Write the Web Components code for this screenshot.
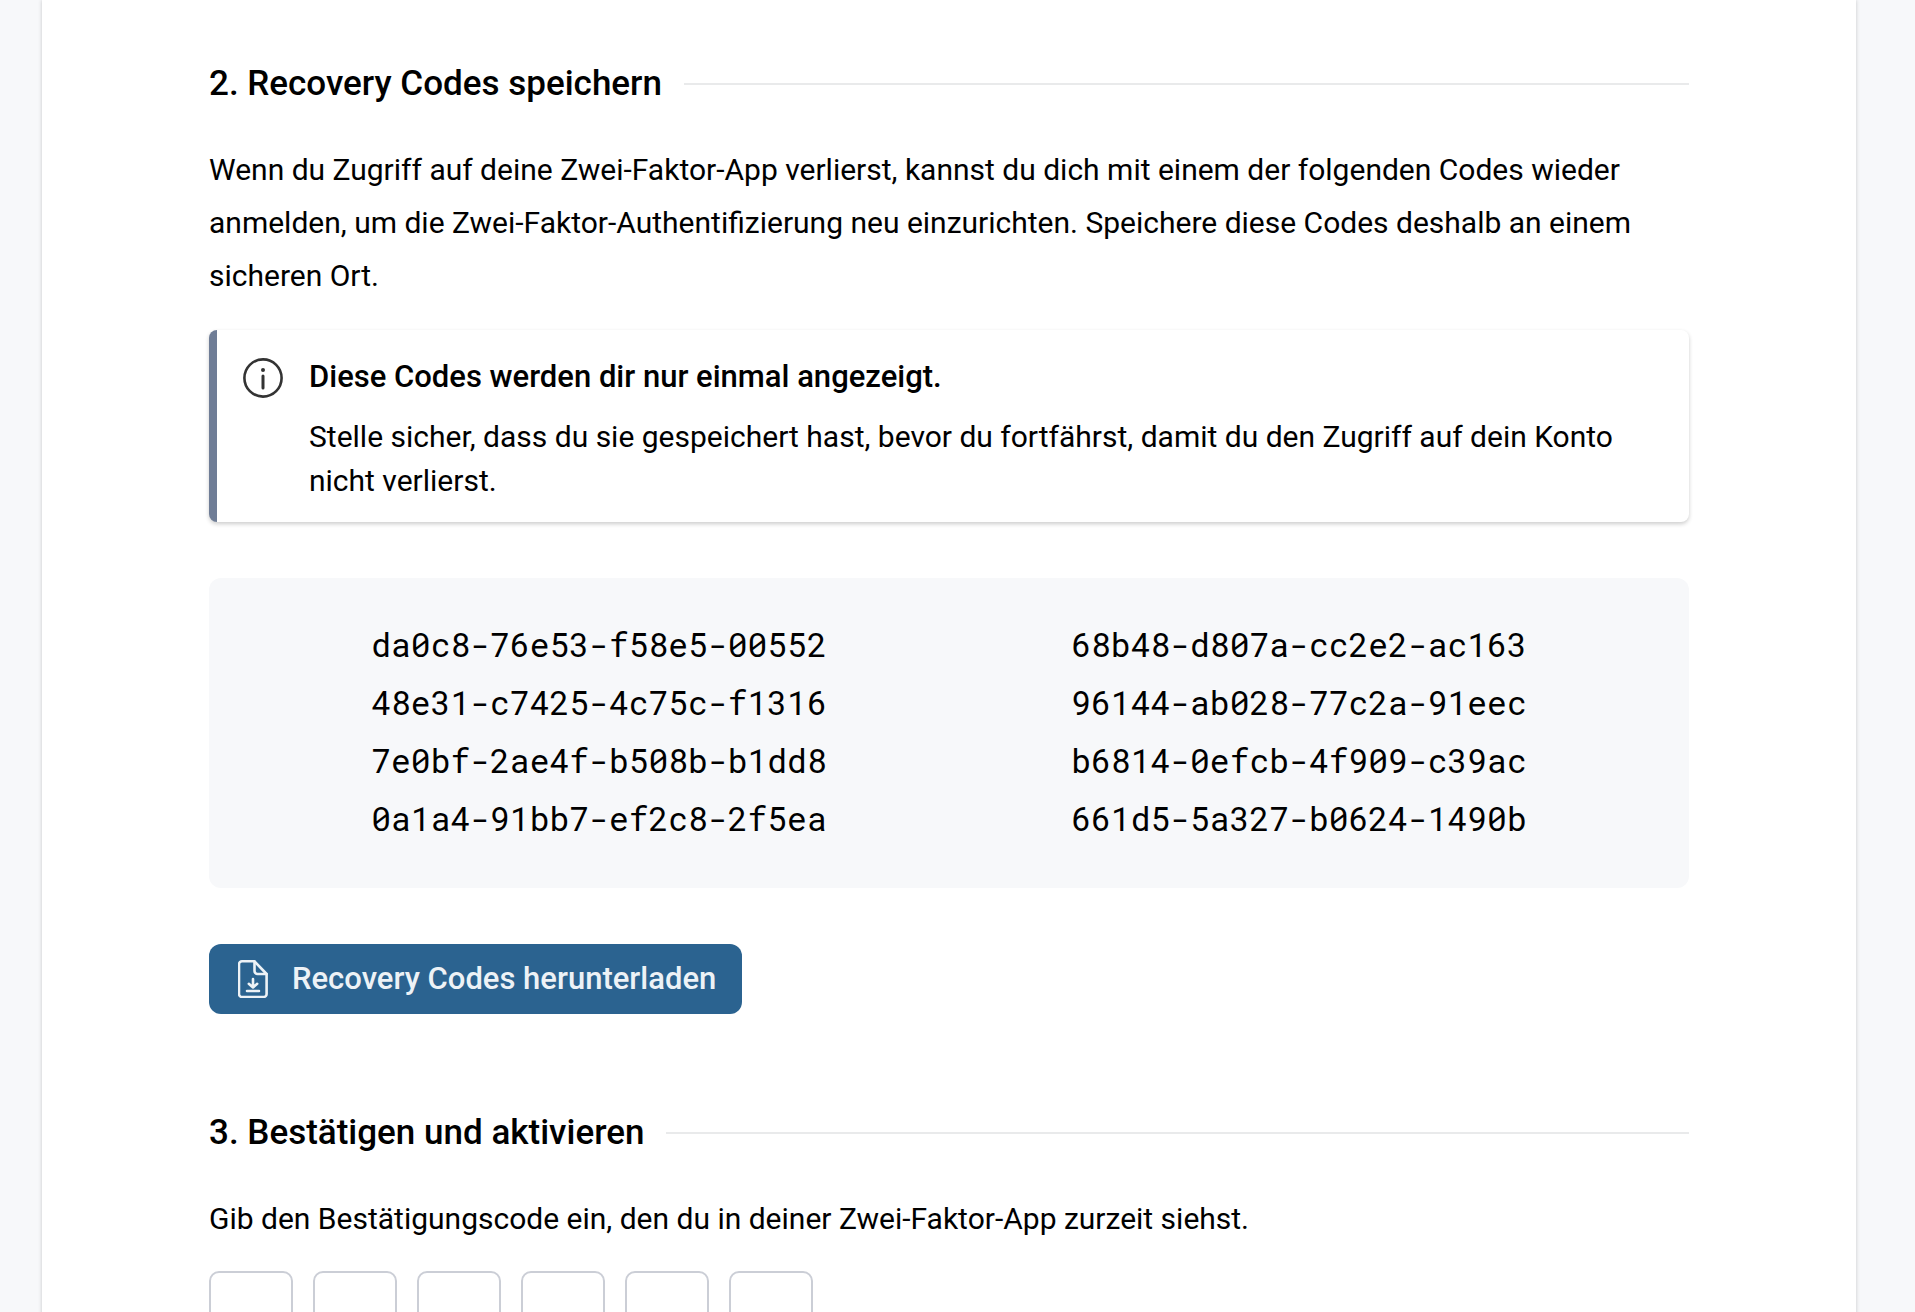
<!DOCTYPE html>
<html lang="de">
<head>
<meta charset="utf-8">
<meta name="viewport" content="width=device-width, initial-scale=1">
<title>Zwei-Faktor-Authentifizierung</title>
<style>
  html { height: 100%; scrollbar-width: none; }
  body {
    min-height: 100%;
    margin: 0;
    background: #f7f8fa;
    color: #000;
    font: 400 30px/53px Roboto, "Liberation Sans", sans-serif;
  }
  p { margin: 0 0 26px; }
</style>
</head>
<body>
<page-card>
  <form-section>
    <span slot="title">2. Recovery Codes speichern</span>
    <p>Wenn du Zugriff auf deine Zwei-Faktor-App verlierst, kannst du dich mit einem der folgenden Codes wieder anmelden, um die Zwei-Faktor-Authentifizierung neu einzurichten. Speichere diese Codes deshalb an einem sicheren Ort.</p>
    <info-notice>
      <span slot="title">Diese Codes werden dir nur einmal angezeigt.</span>
      Stelle sicher, dass du sie gespeichert hast, bevor du fortfährst, damit du den Zugriff auf dein Konto nicht verlierst.
    </info-notice>
    <recovery-codes>
      <span>da0c8-76e53-f58e5-00552</span>
      <span>68b48-d807a-cc2e2-ac163</span>
      <span>48e31-c7425-4c75c-f1316</span>
      <span>96144-ab028-77c2a-91eec</span>
      <span>7e0bf-2ae4f-b508b-b1dd8</span>
      <span>b6814-0efcb-4f909-c39ac</span>
      <span>0a1a4-91bb7-ef2c8-2f5ea</span>
      <span>661d5-5a327-b0624-1490b</span>
    </recovery-codes>
    <download-button>Recovery Codes herunterladen</download-button>
  </form-section>
  <form-section>
    <span slot="title">3. Bestätigen und aktivieren</span>
    <p>Gib den Bestätigungscode ein, den du in deiner Zwei-Faktor-App zurzeit siehst.</p>
    <code-input length="6"></code-input>
  </form-section>
</page-card>
<script>
  function define(name, markup, setup) {
    customElements.define(name, class extends HTMLElement {
      constructor() {
        super();
        this.attachShadow({ mode: 'open' }).innerHTML = markup;
      }
      connectedCallback() {
        if (setup) setup(this, this.shadowRoot);
      }
    });
  }

  define('page-card', `
    <style>
      :host {
        display: block;
        box-sizing: border-box;
        margin: 0 59px 0 42px;
        padding: 63px 167px 1px;
        background: #fff;
        box-shadow: 0 0 4px rgba(0, 0, 0, .2);
      }
    </style>
    <main><slot></slot></main>`);

  define('form-section', `
    <style>
      :host { display: block; margin-bottom: 98px; }
      header { display: flex; align-items: center; gap: 22px; margin-bottom: 38px; }
      h2 { margin: 0; font-size: 35px; font-weight: 500; line-height: 42px; }
      .rule { flex: 1; height: 2px; background: #e9eaeb; }
    </style>
    <section>
      <header><h2><slot name="title"></slot></h2><div class="rule"></div></header>
      <slot></slot>
    </section>`);

  define('info-notice', `
    <style>
      :host {
        display: flex;
        gap: 26px;
        margin: 28px 0 56px;
        padding: 25px 26px 19px;
        border-left: 8px solid #6f7d96;
        border-radius: 8px;
        background: #fff;
        box-shadow: 0 2px 4px rgba(0, 0, 0, .2);
        line-height: 44px;
      }
      svg { flex: none; width: 40px; height: 40px; margin-top: 3px; }
      .text { flex: 1; }
      h3 { margin: 0 0 16px; font-size: 31px; font-weight: 500; }
    </style>
    <svg viewBox="0 0 40 40" fill="none" stroke="#333" stroke-width="2.6" stroke-linecap="round" aria-hidden="true">
      <circle cx="20" cy="20" r="18.6"/>
      <path d="M20 18v12" stroke-width="3"/>
      <circle cx="20" cy="12" r="2" fill="#333" stroke="none"/>
    </svg>
    <div class="text"><h3><slot name="title"></slot></h3><slot></slot></div>`);

  define('recovery-codes', `
    <style>
      :host {
        display: grid;
        grid-template-columns: 1fr 1fr;
        justify-items: center;
        margin-bottom: 56px;
        padding: 37px 40px 41px;
        border-radius: 12px;
        background: #f7f8fa;
        font: 400 33px/58px "Roboto Mono", "Liberation Mono", monospace;
      }
    </style>
    <slot></slot>`);

  define('download-button', `
    <style>
      :host { display: flex; }
      button {
        display: flex;
        align-items: center;
        gap: 24px;
        height: 70px;
        margin: 0;
        padding: 0 26px 0 29px;
        border: 0;
        border-radius: 12px;
        background: #2b6390;
        color: #edf2f6;
        font: 500 31px/44px Roboto, "Liberation Sans", sans-serif;
        cursor: pointer;
      }
      svg { flex: none; width: 30px; height: 38px; }
    </style>
    <button type="button">
      <svg viewBox="0 0 30 38" fill="none" stroke="currentColor" stroke-width="2.6" stroke-linecap="round" stroke-linejoin="round" aria-hidden="true">
        <path d="M4 1.300H16.500L28.600 14V34a3 3 0 0 1-3 3H4a3 3 0 0 1-3-3V4.300a3 3 0 0 1 3-3Z"/>
        <path d="M16.500 1.500V11a3 3 0 0 0 3 3H28.500"/>
        <path d="M15 19V27.500M10.800 23.800L15 27.500L19.200 23.800M9 31H21"/>
      </svg>
      <span><slot></slot></span>
    </button>`);

  define('code-input', `
    <style>
      :host { display: flex; }
      fieldset { display: flex; gap: 20px; margin: 0; padding: 0; border: 0; }
      input {
        box-sizing: border-box;
        width: 84px;
        height: 96px;
        margin: 0;
        padding: 0;
        border: 2px solid #cbced6;
        border-radius: 10px;
        background: #fff;
        text-align: center;
        font: 400 35px/42px Roboto, "Liberation Sans", sans-serif;
      }
    </style>
    <fieldset aria-label="Bestätigungscode"></fieldset>`,
    (host, root) => {
      const box = root.querySelector('fieldset');
      for (let i = 1; i <= Number(host.getAttribute('length')); i++) {
        const input = document.createElement('input');
        input.type = 'text';
        input.inputMode = 'numeric';
        input.maxLength = 1;
        input.setAttribute('aria-label', 'Ziffer ' + i);
        box.append(input);
      }
    });
</script>
</body>
</html>
